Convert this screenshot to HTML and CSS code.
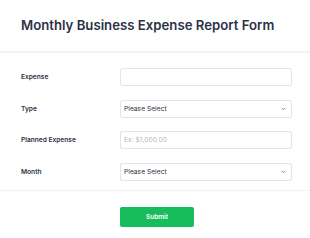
FILE: index.html
```html
<!DOCTYPE html>
<html lang="en">
<head>
<meta charset="utf-8">
<title>Monthly Business Expense Report Form</title>
<link rel="stylesheet" href="styles.css">
</head>
<body>
<div class="header">
  <h1 class="title">Monthly Business Expense Report Form</h1>
</div>
<form class="form">
  <div class="rows">
    <div class="row">
      <label class="label" for="expense">Expense</label>
      <input class="field" id="expense" type="text">
    </div>
    <div class="row">
      <label class="label" for="type">Type</label>
      <div class="field select" id="type">
        <span>Please Select</span>
        <svg class="chev" viewBox="0 0 8 5" width="5" height="3.5"><path d="M1 1l3 3 3-3" fill="none" stroke="#6f7380" stroke-width="1.4"/></svg>
      </div>
    </div>
    <div class="row">
      <label class="label" for="planned">Planned Expense</label>
      <input class="field" id="planned" type="text" placeholder="Ex: $1,000.00">
    </div>
    <div class="row">
      <label class="label" for="month">Month</label>
      <div class="field select" id="month">
        <span>Please Select</span>
        <svg class="chev" viewBox="0 0 8 5" width="5" height="3.5"><path d="M1 1l3 3 3-3" fill="none" stroke="#6f7380" stroke-width="1.4"/></svg>
      </div>
    </div>
  </div>
  <div class="footer">
    <button class="submit" type="button">Submit</button>
  </div>
</form>
</body>
</html>
```

FILE: styles.css
```css
html, body {
  margin: 0;
  padding: 0;
  background: #ffffff;
}
body {
  font-family: Inter, "Noto Sans", sans-serif;
  color: #2c3345;
  width: 310px;
  overflow: hidden;
}
.header {
  height: 51px;
  display: flex;
  align-items: center;
  padding: 0 21px;
  border-bottom: 2px solid #f3f3f5;
}
.title {
  margin: 0;
  font-size: 13.2px;
  font-weight: 600;
  line-height: 1;
  color: #2c3345;
  white-space: nowrap;
}
.form {
  margin: 0;
}
.rows {
  display: flex;
  flex-direction: column;
  gap: 13.5px;
  padding: 15px 18px 9px 21px;
  border-bottom: 1px solid #f1f2f4;
}
.row {
  display: grid;
  grid-template-columns: 99px 1fr;
  align-items: center;
}
.label {
  font-size: 6.6px;
  font-weight: 600;
  color: #2c3345;
}
.field {
  box-sizing: border-box;
  height: 18px;
  width: 100%;
  margin: 0;
  border: 1px solid #e3e5ea;
  border-radius: 2px;
  background: #fff;
  font-family: Inter, "Noto Sans", sans-serif;
  font-size: 6.7px;
  color: #2c3345;
  padding: 0 3px;
  outline: none;
}
.field::placeholder {
  color: #b4b7bf;
}
.select {
  display: flex;
  align-items: center;
  justify-content: space-between;
  padding: 0 5px 0 3px;
}
.chev {
  display: block;
}
.footer {
  padding: 12px 0 0 120px;
}
.submit {
  width: 74px;
  height: 20px;
  border: none;
  border-radius: 2px;
  background: #18bd5b;
  color: #ffffff;
  font-family: Inter, "Noto Sans", sans-serif;
  font-size: 6.5px;
  font-weight: 600;
  padding: 0;
}
```
